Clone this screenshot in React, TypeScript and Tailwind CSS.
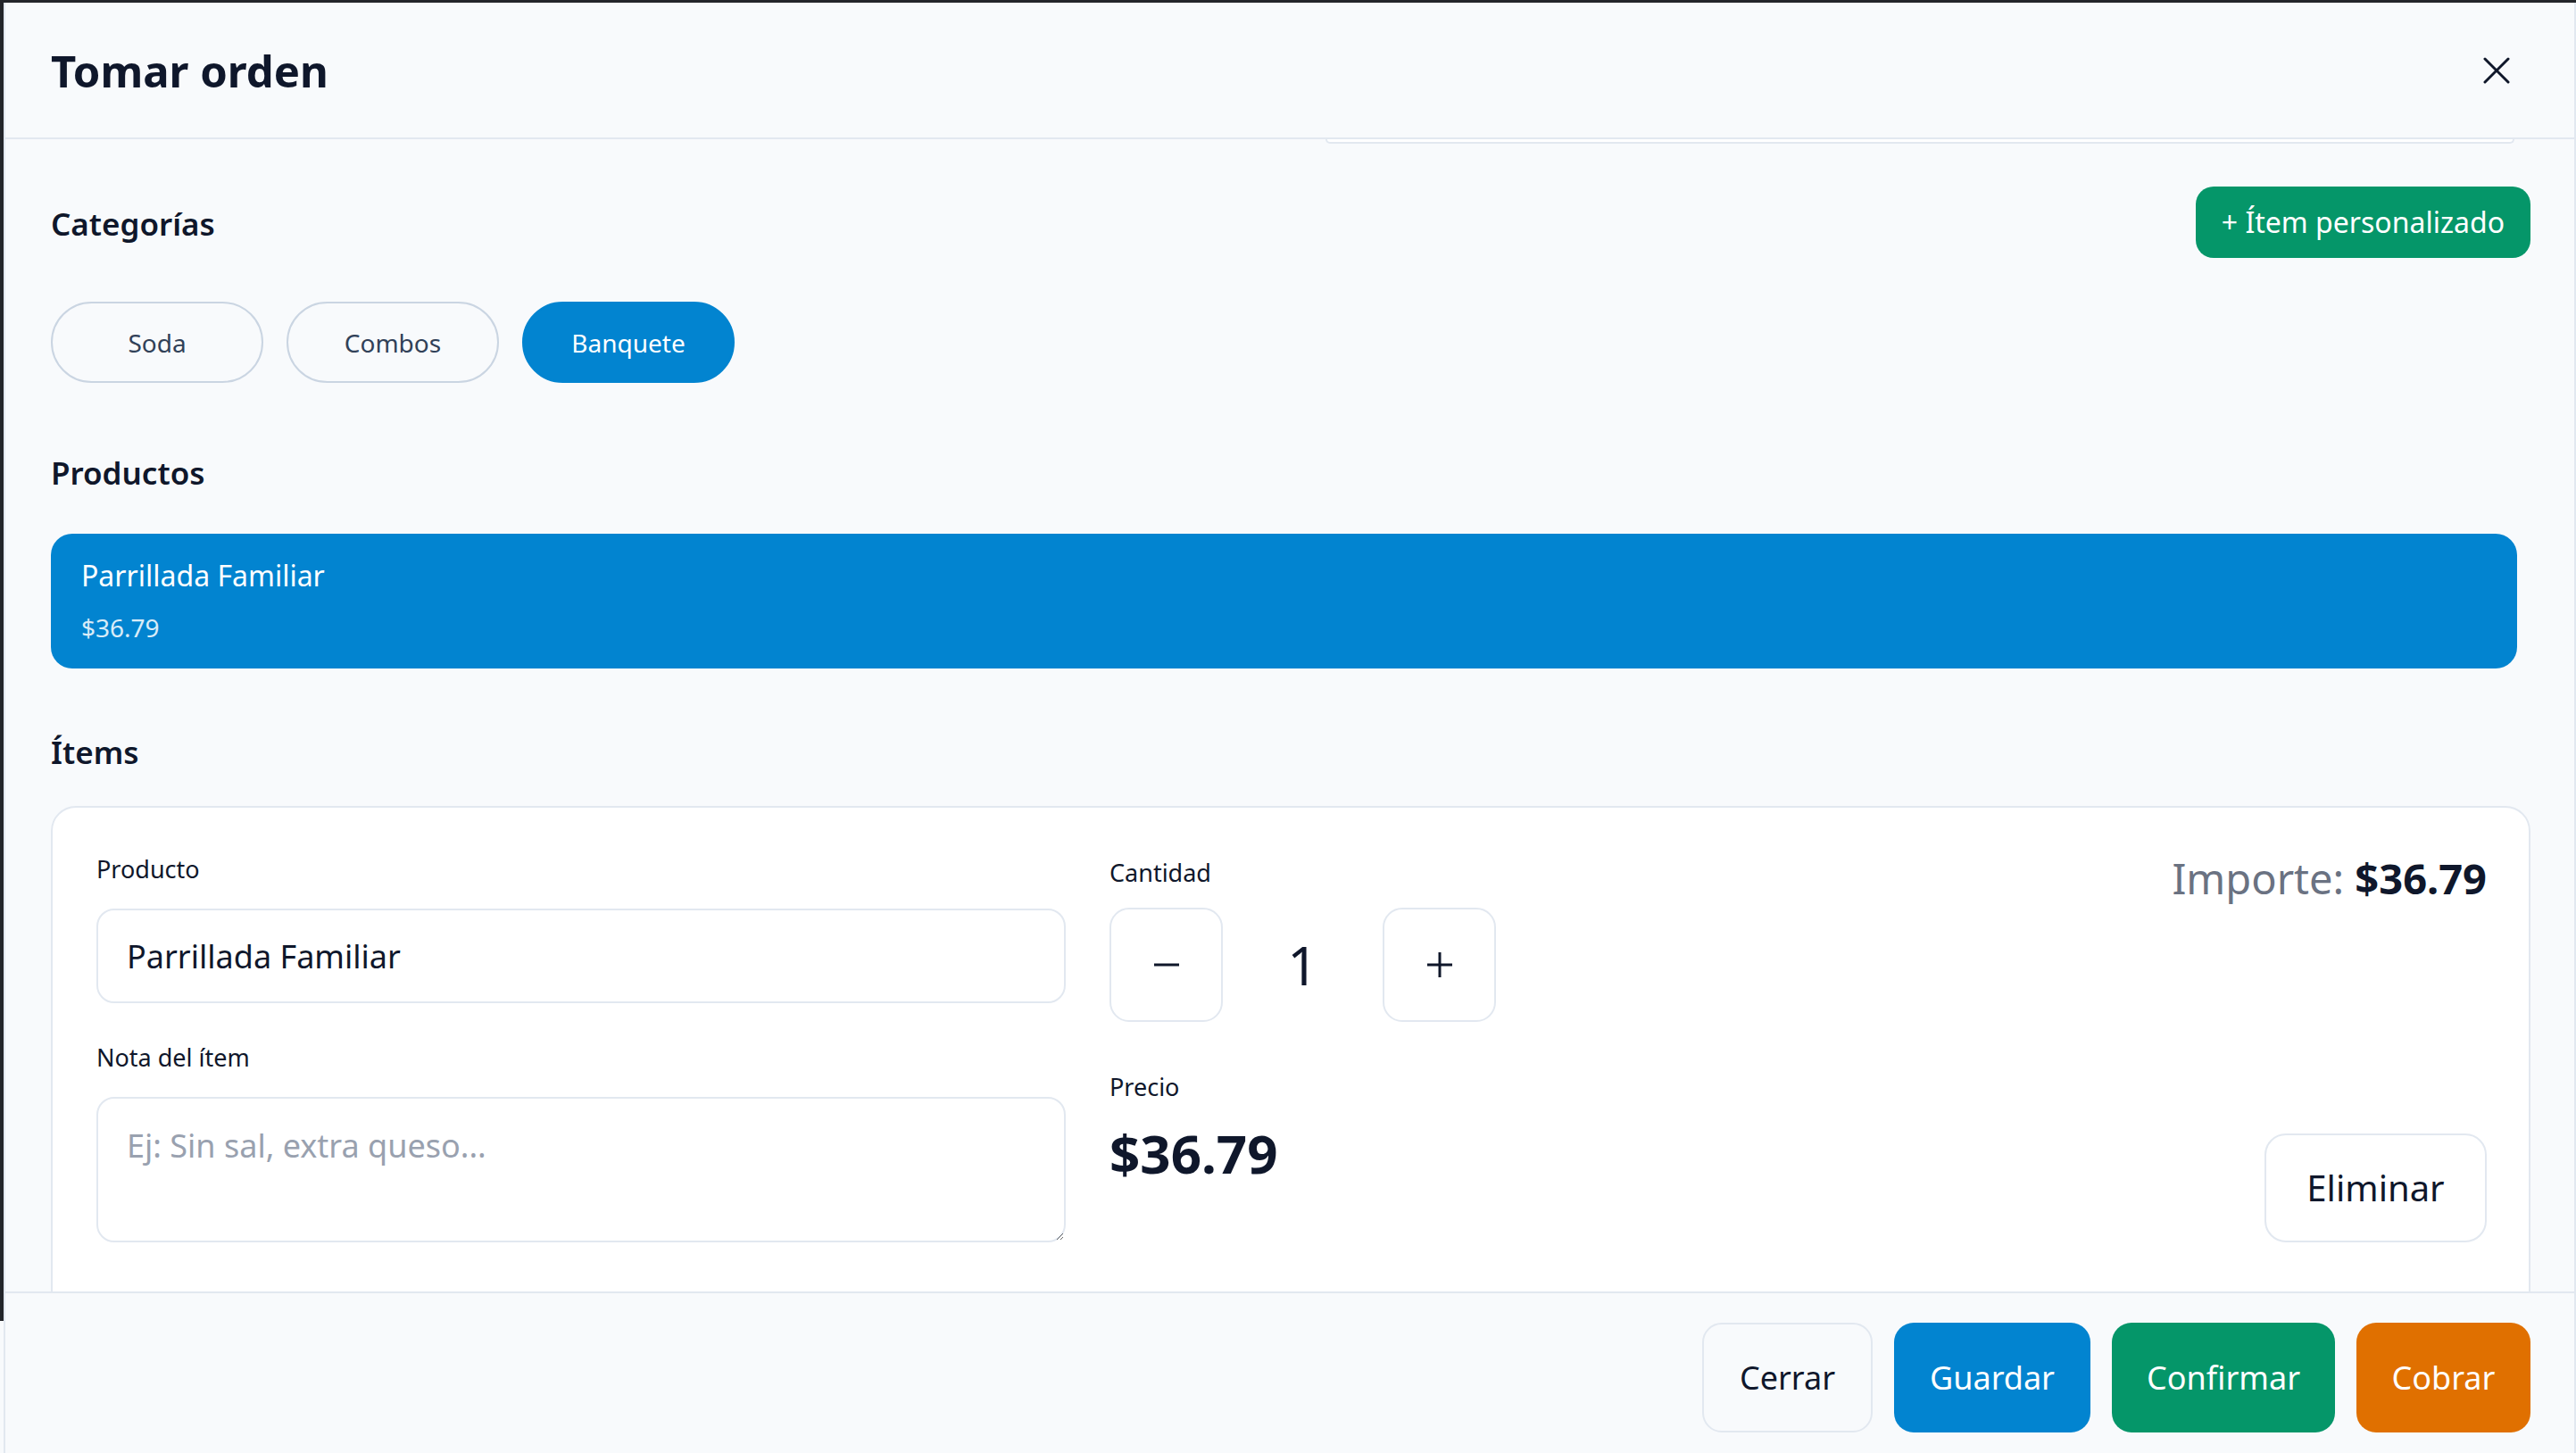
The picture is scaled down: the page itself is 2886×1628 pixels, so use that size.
import { useState } from "react";

const categorias = ["Soda", "Combos", "Banquete"];

function IconX() {
  return (
    <svg width="30" height="30" viewBox="0 0 30 30" fill="none" stroke="#0f172a" strokeWidth="3" strokeLinecap="round">
      <path d="M2 2 28 28" />
      <path d="M28 2 2 28" />
    </svg>
  );
}

function IconMinus() {
  return (
    <svg width="30" height="30" viewBox="0 0 30 30" fill="none" stroke="#0f172a" strokeWidth="3">
      <path d="M1 15h28" />
    </svg>
  );
}

function IconPlus() {
  return (
    <svg width="30" height="30" viewBox="0 0 30 30" fill="none" stroke="#0f172a" strokeWidth="3">
      <path d="M1 15h28" />
      <path d="M15 1v28" />
    </svg>
  );
}

export default function App() {
  const [categoria, setCategoria] = useState("Banquete");
  const [cantidad, setCantidad] = useState(1);
  const [nota, setNota] = useState("");

  const precio = 36.79;

  return (
    <div
      className="w-full h-[1628px] bg-slate-50 overflow-hidden"
      style={{ fontFamily: '"Noto Sans", "Open Sans", sans-serif' }}
    >
      <div className="h-[3px] bg-[#23252a]" />
      <div className="flex">
        {/* fondo oscuro detrás del modal */}
        <div className="w-[4px] h-[1477px] bg-[#23252a] shrink-0" />
        <div className="flex-1 h-[1625px] bg-slate-50 border-l-2 border-r-2 border-slate-200 flex flex-col">
          {/* header */}
          <div className="h-[153px] shrink-0 border-b-2 border-slate-200 flex items-center justify-between pl-[51px] pr-[59px]">
            <h1 className="text-[49px] font-bold text-slate-900 leading-none mt-[2px]">Tomar orden</h1>
            <button className="p-[13px]">
              <IconX />
            </button>
          </div>

          {/* contenido */}
          <div className="flex-1 overflow-hidden pl-[51px] pr-[49px]">
            {/* resto del buscador que quedó arriba al hacer scroll */}
            <div className="ml-[1428px] w-[1332px] h-[5px] bg-white border-x-2 border-b-2 border-slate-200 rounded-b-[10px]" />

            <div className="mt-[48px] h-[80px] flex items-center justify-between">
              <h2 className="text-[35px] font-semibold text-slate-900 leading-none mt-[2px]">Categorías</h2>
              <button className="h-[80px] px-[29px] rounded-[20px] bg-[#059669] text-white text-[32px]">
                + Ítem personalizado
              </button>
            </div>

            <div className="mt-[49px] flex gap-[26px]">
              {categorias.map((c) => (
                <button
                  key={c}
                  onClick={() => setCategoria(c)}
                  className={
                    c === categoria
                      ? "w-[238px] h-[91px] rounded-full bg-[#0284d0] border-2 border-[#0284d0] text-white text-[28px]"
                      : "w-[238px] h-[91px] rounded-full bg-slate-50 border-2 border-slate-300 text-slate-700 text-[28px]"
                  }
                >
                  {c}
                </button>
              ))}
            </div>

            <h2 className="mt-[83px] text-[35px] font-semibold text-slate-900 leading-none">Productos</h2>

            <div className="mt-[51px] mr-[15px] h-[151px] rounded-[24px] bg-[#0284d0] px-[34px] pt-[26px]">
              <div className="text-[32px] text-white leading-[42px]">Parrillada Familiar</div>
              <div className="mt-[19px] text-[28px] text-white/85 leading-[36px]">$36.79</div>
            </div>

            <h2 className="mt-[76px] text-[35px] font-semibold text-slate-900 leading-none">Ítems</h2>

            <div className="mt-[43px] bg-white border-2 border-slate-200 rounded-[28px] pl-[49px] pr-[47px] pt-[51px] pb-[48px]">
              <div className="flex">
                {/* izquierda */}
                <div className="w-[1086px] flex flex-col">
                  <label className="text-[27px] text-slate-900 leading-[36px]">Producto</label>
                  <input
                    readOnly
                    value="Parrillada Familiar"
                    className="mt-[26px] h-[106px] rounded-[20px] border-2 border-slate-200 bg-white px-[32px] text-[36px] text-slate-900 outline-none"
                  />
                  <label className="mt-[43px] text-[27px] text-slate-900 leading-[36px]">Nota del ítem</label>
                  <textarea
                    value={nota}
                    onChange={(e) => setNota(e.target.value)}
                    placeholder="Ej: Sin sal, extra queso..."
                    className="mt-[26px] h-[163px] rounded-[20px] border-2 border-slate-200 bg-white px-[32px] pt-[29px] text-[36px] leading-[48px] text-slate-900 placeholder:text-gray-400 outline-none resize-y"
                  />
                </div>

                {/* centro */}
                <div className="ml-[49px] flex flex-col">
                  <label className="mt-[4px] text-[27px] text-slate-900 leading-[36px]">Cantidad</label>
                  <div className="mt-[21px] flex items-center">
                    <button
                      onClick={() => setCantidad(Math.max(1, cantidad - 1))}
                      className="w-[127px] h-[128px] rounded-[22px] border-2 border-slate-200 bg-white flex items-center justify-center"
                    >
                      <IconMinus />
                    </button>
                    <span className="w-[179px] text-center text-[60px] text-slate-900 leading-none">{cantidad}</span>
                    <button
                      onClick={() => setCantidad(cantidad + 1)}
                      className="w-[127px] h-[128px] rounded-[22px] border-2 border-slate-200 bg-white flex items-center justify-center"
                    >
                      <IconPlus />
                    </button>
                  </div>
                  <label className="mt-[55px] text-[27px] text-slate-900 leading-[36px]">Precio</label>
                  <div className="mt-[26px] text-[60px] font-bold text-slate-900 leading-none">${precio.toFixed(2)}</div>
                </div>

                {/* derecha */}
                <div className="flex-1 flex flex-col items-end justify-between">
                  <div className="mt-[5px] text-[47px] leading-none text-gray-500">
                    Importe: <span className="font-bold text-slate-900">${(precio * cantidad).toFixed(2)}</span>
                  </div>
                  <button className="w-[249px] h-[122px] rounded-[24px] border-2 border-slate-200 bg-white text-[40px] text-slate-900">
                    Eliminar
                  </button>
                </div>
              </div>
              <div className="h-[200px]" />
            </div>
          </div>

          {/* pie */}
          <div className="h-[181px] shrink-0 border-t-2 border-slate-200 bg-slate-50 flex justify-end items-start gap-[24px] pt-[33px] pr-[49px]">
            <button className="w-[191px] h-[123px] rounded-[22px] border-2 border-slate-200 bg-slate-50 text-[36px] text-slate-900">
              Cerrar
            </button>
            <button className="w-[220px] h-[123px] rounded-[22px] bg-[#0284d0] text-[36px] text-white">Guardar</button>
            <button className="w-[250px] h-[123px] rounded-[22px] bg-[#059669] text-[36px] text-white">Confirmar</button>
            <button className="w-[195px] h-[123px] rounded-[22px] bg-[#e07000] text-[36px] text-white">Cobrar</button>
          </div>
        </div>
      </div>
    </div>
  );
}
